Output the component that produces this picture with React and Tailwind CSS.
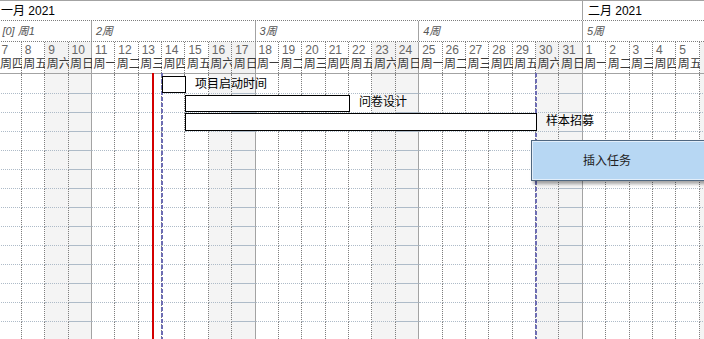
import React from "react";

const WEEKDAYS = ["周一", "周二", "周三", "周四", "周五", "周六", "周日"];

// Jan 7 2021 is a Thursday
const days = [];
for (let d = 7; d <= 31; d++) days.push({ num: d });
for (let d = 1; d <= 6; d++) days.push({ num: d });
days.forEach((day, i) => {
  day.wd = (3 + i) % 7;
});

const weeks = [
  { label: "[0] 周1", width: "w-[93.52px]" },
  { label: "2周", width: "w-[163.66px]" },
  { label: "3周", width: "w-[163.66px]" },
  { label: "4周", width: "w-[163.66px]" },
  { label: "5周", width: "w-[163.66px]" },
];

const tasks = [
  { name: "项目启动时间", pad: "pl-[162px]", bar: "w-[24px] h-[17px]" },
  { name: "问卷设计", pad: "pl-[185px]", bar: "w-[165px] h-[17px]" },
  { name: "样本招募", pad: "pl-[185px]", bar: "w-[352px] h-[18px]" },
];

const ROWS = 14;

function cellBorder(wd) {
  // Sunday closes the week with a solid line
  return wd === 6
    ? "border-r border-solid border-r-[#a3a3a3]"
    : "border-r border-dotted border-r-[#7d7d7d]";
}

function DayHeader({ day, last }) {
  const weekend = day.wd >= 5;
  return (
    <div
      className={`w-[23.38px] shrink-0 h-[31px] flex flex-col whitespace-nowrap ${cellBorder(
        day.wd
      )} ${weekend ? "bg-[#f2f2f2]" : "bg-white"}`}
    >
      {!last && (
        <>
          <span className="pl-[3px] pt-[1px] text-[12px] leading-[14px] text-[#666]">
            {day.num}
          </span>
          <span className="pl-[1.5px] text-[12px] leading-[15px] text-[#3a3a3a]">
            {WEEKDAYS[day.wd]}
          </span>
        </>
      )}
    </div>
  );
}

function BodyRow({ first }) {
  return (
    <div className={`flex ${first ? "h-[20px]" : "h-[19px]"}`}>
      {days.map((day, i) => (
        <div
          key={i}
          className={`w-[23.38px] shrink-0 border-b border-b-[#aebbc8] border-dotted ${cellBorder(
            day.wd
          )} ${day.wd >= 5 ? "bg-[#f4f4f4]" : "bg-white"}`}
        />
      ))}
    </div>
  );
}

export default function App() {
  return (
    <div
      className="relative w-[704px] h-[339px] overflow-hidden bg-white text-black"
      style={{ fontFamily: '"Liberation Sans", "Noto Sans CJK SC", sans-serif' }}
    >
      <div className="ml-[-1.6px] w-[740px] border-t border-t-[#a3a3a3]">
        {/* month row */}
        <div className="flex h-[20px] border-b border-dotted border-b-[#7d7d7d]">
          <div className="w-[584.5px] shrink-0 border-r border-r-[#a3a3a3] pl-[2.6px] flex items-center text-[12px]">
            一月 2021
          </div>
          <div className="flex-1 pl-[5px] flex items-center text-[12px]">
            二月 2021
          </div>
        </div>

        {/* week row */}
        <div className="flex h-[21px] border-b border-dotted border-b-[#7d7d7d]">
          {weeks.map((w, i) => (
            <div
              key={i}
              className={`${w.width} shrink-0 border-r border-r-[#a3a3a3] pl-[4px] flex items-center italic text-[11px] text-[#555]`}
            >
              {w.label}
            </div>
          ))}
        </div>

        {/* day row */}
        <div className="flex h-[32px] border-b border-b-[#a3a3a3]">
          {days.map((day, i) => (
            <DayHeader key={i} day={day} last={i === days.length - 1} />
          ))}
        </div>

        {/* body grid */}
        <div>
          {Array.from({ length: ROWS }).map((_, i) => (
            <BodyRow key={i} first={i === 0} />
          ))}
        </div>
      </div>

      {/* today marker and project bounds */}
      <div className="absolute left-[152px] top-[73px] bottom-0 w-[2px] bg-[#d40000]" />
      <div className="absolute left-[161px] top-[73px] bottom-0 w-[2px] bg-[repeating-linear-gradient(to_bottom,#6d6db3_0px,#6d6db3_4px,transparent_4px,transparent_6px)]" />
      <div className="absolute left-[535px] top-[73px] bottom-0 w-[2px] bg-[repeating-linear-gradient(to_bottom,#6d6db3_0px,#6d6db3_4px,transparent_4px,transparent_6px)]" />

      {/* task bars */}
      <div className="absolute left-0 top-[75px] right-0 flex flex-col">
        {tasks.map((t, i) => (
          <div
            key={i}
            className={`flex items-center gap-[9px] ${t.pad} ${
              i === 0 ? "h-[19px]" : "h-[18.5px]"
            }`}
          >
            <div className={`${t.bar} shrink-0 border border-black bg-white`} />
            <span className="text-[12px] leading-[16px] whitespace-nowrap -mt-[2px]">
              {t.name}
            </span>
          </div>
        ))}
      </div>

      {/* insert task popup */}
      <div className="absolute left-[531px] top-[140px] w-[200px] h-[41px] border border-[#4f6780] bg-[#b7d7f3] shadow-[2px_3px_3px_rgba(0,0,0,0.35)]">
        <div className="h-full border border-[#e2eefa] flex items-center pl-[50px] text-[12px] text-[#222]">
          插入任务
        </div>
      </div>
    </div>
  );
}
